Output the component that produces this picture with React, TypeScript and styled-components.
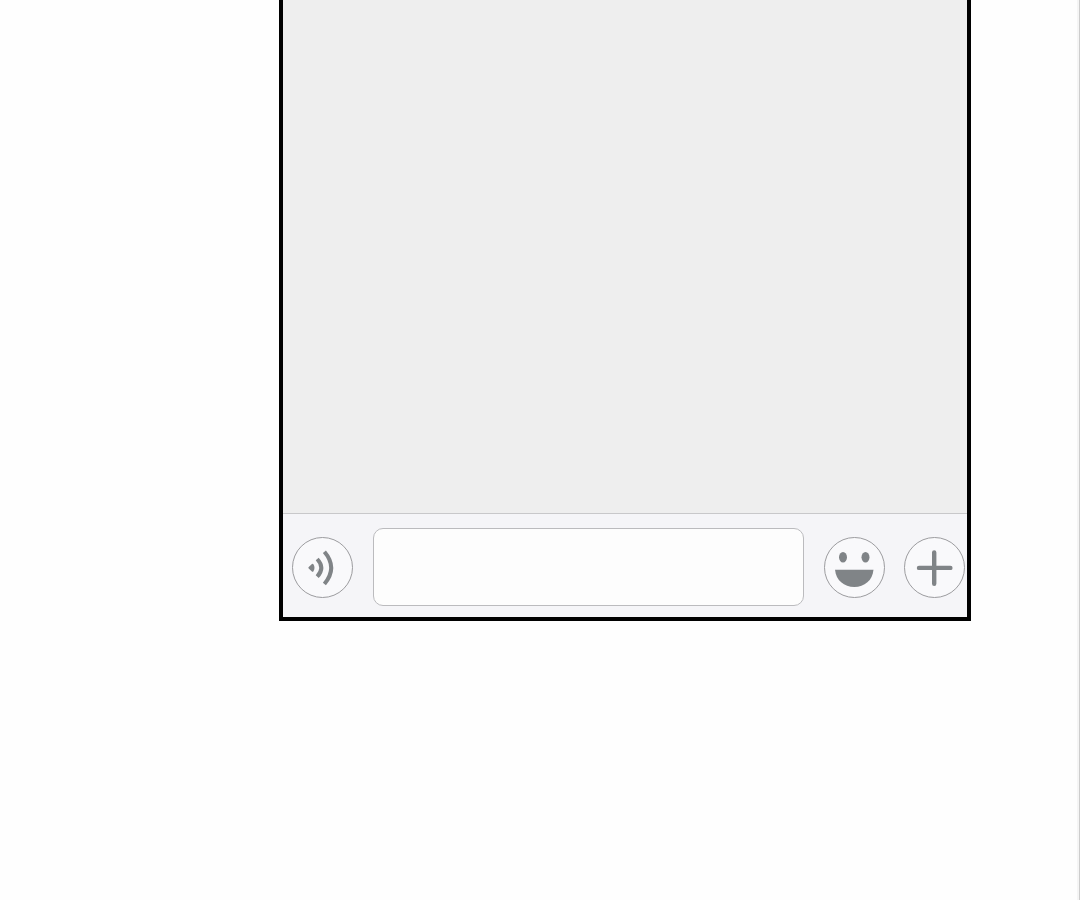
import React from "react";
import styled, { createGlobalStyle } from "styled-components";

const GlobalStyle = createGlobalStyle`
  *, *::before, *::after { box-sizing: border-box; }
  body {
    margin: 0;
    background: #fefefe;
    font-family: "Liberation Sans", Arial, sans-serif;
  }
`;

const Page = styled.main`
  display: flex;
  min-height: 100vh;
  padding: 0 108px 0 279px;
  align-items: flex-start;
  border-right: 1px solid #cdcdcd;
  box-shadow: inset -2px 0 0 #f5f5f5;
`;

const ChatFrame = styled.section`
  display: flex;
  flex: 1;
  flex-direction: column;
  min-width: 0;
  height: 69vh;
  border: 4px solid #000;
  border-top: 0;
`;

const MessageArea = styled.div`
  flex: 1;
  background: #eeeeee;
`;

const InputBar = styled.form`
  display: flex;
  align-items: center;
  gap: 20px;
  padding: 14px 2px 11px 9px;
  border-top: 1px solid #c8c8ca;
  background: #f5f5f8;
`;

const MessageInput = styled.input`
  flex: 1;
  min-width: 0;
  height: 78px;
  padding: 0 16px;
  border: 1px solid #bbbbbe;
  border-radius: 10px;
  background: #fdfdfd;
  color: #222;
  font: inherit;
  font-size: 32px;
  outline: none;
`;

const Actions = styled.div`
  display: flex;
  gap: 19px;
`;

const RoundButton = styled.button`
  flex: none;
  width: 61px;
  height: 61px;
  padding: 0;
  border: 1px solid #9c9c9f;
  border-radius: 50%;
  background: #f9f9fb;
  color: #808487;
  cursor: pointer;
`;

const Icon = styled.svg`
  display: block;
  width: 59px;
  height: 59px;
`;

function VoiceIcon() {
  return (
    <Icon viewBox="0 0 59 59" fill="none" stroke="currentColor" strokeWidth="4" aria-hidden="true">
      <path
        d="M16.4 29.7 L19.6 26.8 Q21.4 29.7 19.6 32.8 Z"
        fill="currentColor"
        strokeWidth="2"
        strokeLinejoin="round"
      />
      <path d="M24.2 21 Q32.4 29.8 24.2 38.7" />
      <path d="M31.4 13.8 Q45 29.8 31.4 46" />
    </Icon>
  );
}

function SmileIcon() {
  return (
    <Icon viewBox="0 0 59 59" fill="currentColor" aria-hidden="true">
      <ellipse cx="18" cy="19.2" rx="4" ry="5.2" />
      <ellipse cx="40.5" cy="19.2" rx="4" ry="5.2" />
      <path d="M10 31.8 H48.5 C47.5 42.5 39.5 49 29.3 49 S11 42.5 10 31.8 Z" />
    </Icon>
  );
}

function PlusIcon() {
  return (
    <Icon
      viewBox="0 0 59 59"
      fill="none"
      stroke="currentColor"
      strokeWidth="4.4"
      strokeLinecap="round"
      aria-hidden="true"
    >
      <path d="M14 29.9 H45.4 M29.2 14.4 V45.8" />
    </Icon>
  );
}

export default function App() {
  return (
    <>
      <GlobalStyle />
      <Page>
        <ChatFrame aria-label="Chat">
          <MessageArea role="log" />
          <InputBar onSubmit={(e: React.FormEvent) => e.preventDefault()}>
            <RoundButton type="button" aria-label="Voice message">
              <VoiceIcon />
            </RoundButton>
            <MessageInput type="text" aria-label="Message" />
            <Actions>
              <RoundButton type="button" aria-label="Emoji">
                <SmileIcon />
              </RoundButton>
              <RoundButton type="button" aria-label="More">
                <PlusIcon />
              </RoundButton>
            </Actions>
          </InputBar>
        </ChatFrame>
      </Page>
    </>
  );
}
